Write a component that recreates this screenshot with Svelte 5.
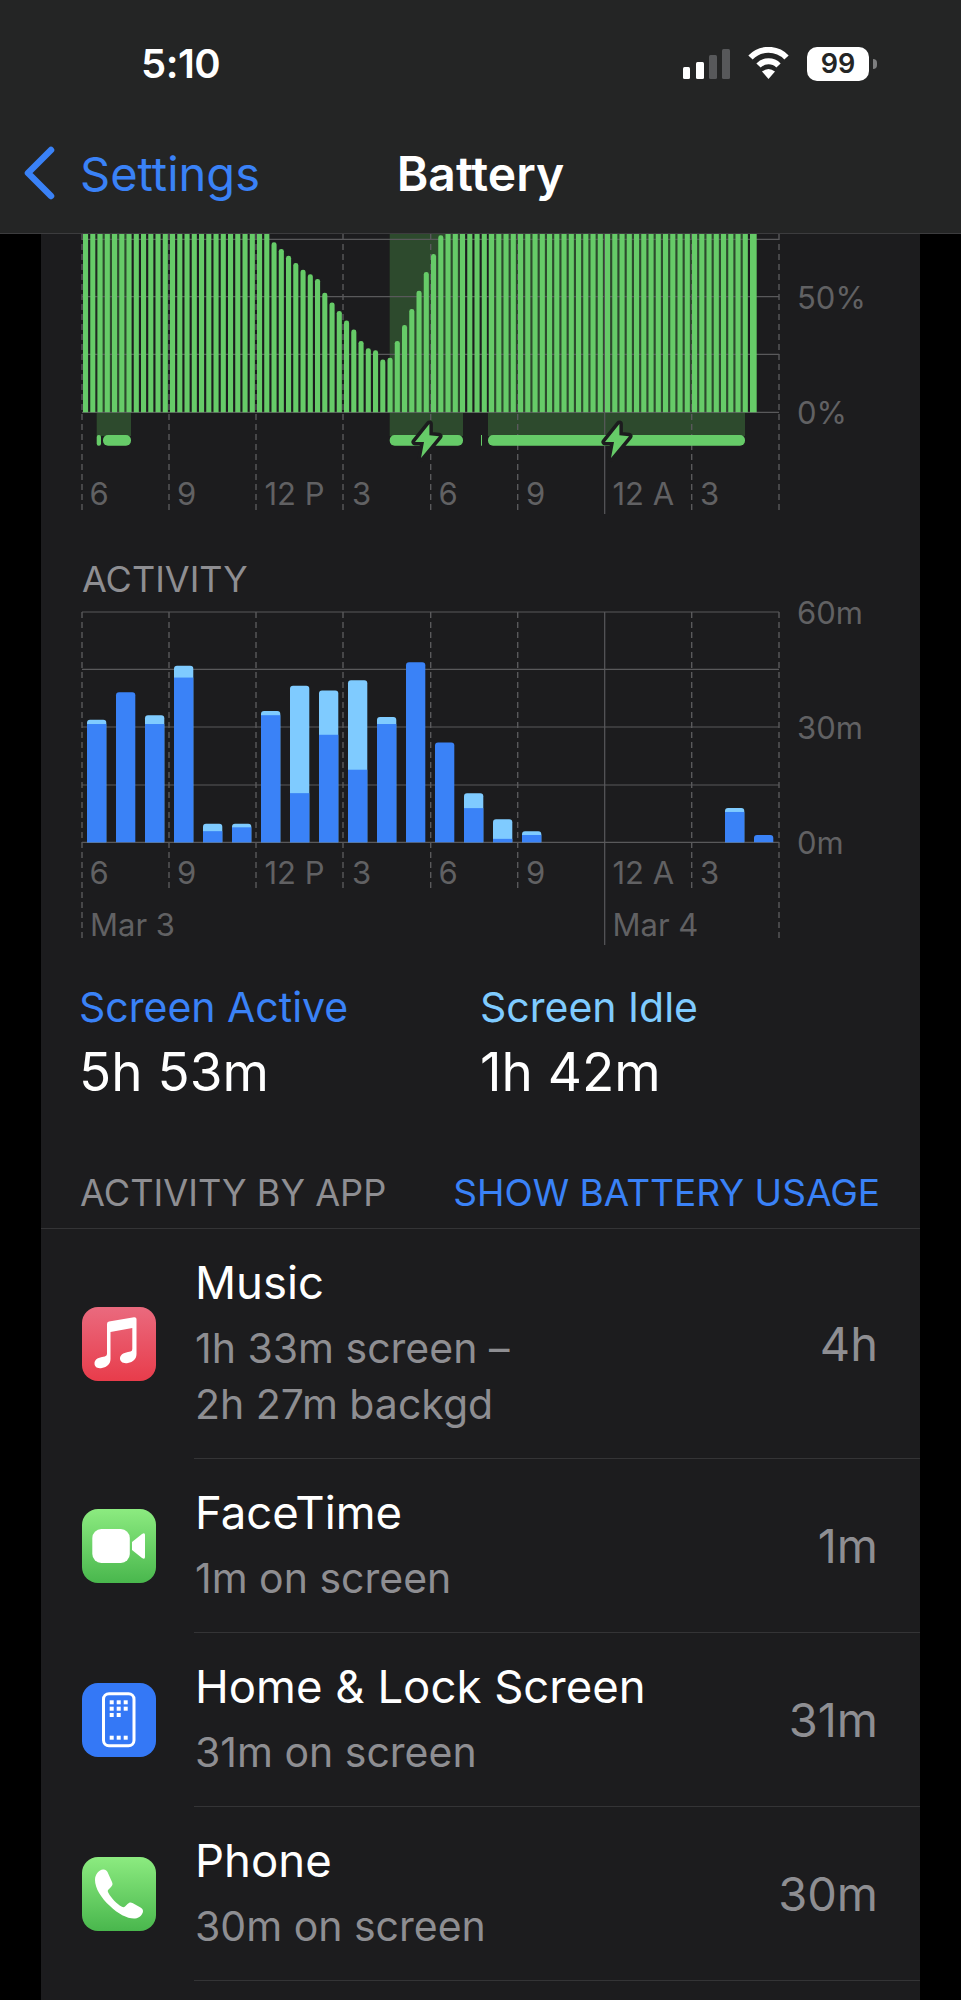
<script>
  // battery level per 15 min bar (percent), 93 bars
  const dip = [73.8, 70.9, 67.9, 64.8, 61.9, 59.9, 57.9, 51.9, 47.7, 44, 39.8, 35.9, 31, 27.8, 26.9, 22.9, 23.7, 31, 37.9, 44.8, 52.8, 60.9, 68.7, 76.8];
  const levels = [...Array(26).fill(100), ...dip, ...Array(43).fill(100)];

  // [active, idle] minutes per hour
  const activity = [
    [30.8, 1.1], [39.1, 0], [30.8, 2.3], [42.9, 3.1], [2.9, 1.9], [3.9, 0.9],
    [33.1, 1.1], [12.8, 28], [28, 11.5], [18.9, 23.3], [30.8, 1.8], [46.9, 0],
    [26, 0], [8.9, 3.9], [0.9, 5.1], [1.9, 1], [0, 0], [0, 0],
    [0, 0], [0, 0], [0, 0], [0, 0], [7.9, 1], [1.9, 0]
  ];

  const hours = [82, 169, 256, 343, 430.7, 517.7, 604.7, 691.7, 779];
  const hourLabels = [
    { x: 89.5, t: '6' }, { x: 177, t: '9' }, { x: 264.5, t: '12 P' }, { x: 352, t: '3' },
    { x: 438.5, t: '6' }, { x: 526, t: '9' }, { x: 612.5, t: '12 A' }, { x: 700, t: '3' }
  ];
  const charging = [
    { x: 96.7, w: 34.3 },
    { x: 389.7, w: 73.3 },
    { x: 488, w: 257 }
  ];
  const pills = [
    { x: 96.7, w: 4.3, r: 2 },
    { x: 103, w: 28, r: 5 },
    { x: 389.7, w: 73.3, r: 5 },
    { x: 481, w: 1, r: 0 },
    { x: 488, w: 257, r: 5 }
  ];
  const bolts = [426.7, 616.7];

  const battBase = 412.3;
  const actBase = 842.3;
  const perMin = 3.84;

  function topRound(x, w, top, bottom, r) {
    return `M${x} ${bottom}V${top + r}Q${x} ${top} ${x + r} ${top}H${x + w - r}Q${x + w} ${top} ${x + w} ${top + r}V${bottom}Z`;
  }

  const apps = [
    { name: 'Music', sub: ['1h 33m screen –', '2h 27m backgd'], time: '4h', icon: 'music' },
    { name: 'FaceTime', sub: ['1m on screen'], time: '1m', icon: 'facetime' },
    { name: 'Home & Lock Screen', sub: ['31m on screen'], time: '31m', icon: 'home' },
    { name: 'Phone', sub: ['30m on screen'], time: '30m', icon: 'phone' }
  ];
</script>

<div class="screen">
  <header class="top">
    <div class="status">
      <span class="clock">5:10</span>
      <div class="status-icons">
        <div class="signal">
          <i class="s1"></i><i class="s2"></i><i class="s3 off"></i><i class="s4 off"></i>
        </div>
        <svg class="wifi" width="43" height="32" viewBox="0 0 43 32">
          <path d="M3.5 10.5A25 25 0 0 1 39.5 10.5" fill="none" stroke="#fff" stroke-width="6" />
          <path d="M11.5 18.5A14 14 0 0 1 31.5 18.5" fill="none" stroke="#fff" stroke-width="6" />
          <path d="M15 24.5Q21.5 19.5 28 24.5L21.5 32Z" fill="#fff" />
        </svg>
        <div class="batt">
          <span class="batt-body">99</span>
          <span class="batt-nub"></span>
        </div>
      </div>
    </div>
    <nav class="nav">
      <div class="back">
        <svg width="32" height="54" viewBox="0 0 32 54">
          <path d="M28 4L5 27L28 50" fill="none" stroke="#3a82f7" stroke-width="6.5" stroke-linecap="round" stroke-linejoin="round" />
        </svg>
        <span>Settings</span>
      </div>
      <div class="title">Battery</div>
      <div></div>
    </nav>
  </header>

  <main class="content">
    <svg class="chart" width="879" height="292" viewBox="41 234 879 292">
      {#each charging as c}
        <rect x={c.x} y="234" width={c.w} height="202" fill="#2d4a2d" />
      {/each}
      {#each [239.3, 296.7, 354.3, 412.3] as y}
        <line class="grid" x1="82" x2="779" y1={y} y2={y} />
      {/each}
      {#each hours as x, i}
        {#if i === 6}
          <line class="grid" x1={x} x2={x} y1="234" y2="514" />
        {:else}
          <line class="dash" x1={x} x2={x} y1="234" y2="510" />
        {/if}
      {/each}
      {#each levels as level, i}
        <path class="bar" d={topRound(83 + i * 7.25, i === 92 ? 6.7 : 5.1, battBase - level * 2.304, battBase, 2.4)} />
      {/each}
      {#each pills as p}
        <rect class="bar" x={p.x} y="435" width={p.w} height="10.7" rx={p.r} />
      {/each}
      {#each bolts as x}
        <path class="bolt" transform="translate({x} 438)" d="M2.7 -14L-11.7 4L-2.7 4L-5.7 20L12.3 -1.7L2.7 -2.7Z" />
      {/each}
      {#each hourLabels as l}
        <text class="axis" x={l.x} y="505">{l.t}</text>
      {/each}
      <text class="axis" x="797" y="309">50%</text>
      <text class="axis" x="797" y="424">0%</text>
    </svg>

    <h2 class="heading">ACTIVITY</h2>

    <svg class="chart" width="879" height="355" viewBox="41 595 879 355">
      {#each [612, 669.3, 727, 785, 842.3] as y}
        <line class="grid" x1="82" x2="779" y1={y} y2={y} />
      {/each}
      {#each hours as x, i}
        {#if i === 6}
          <line class="grid" x1={x} x2={x} y1="612" y2="945" />
        {:else}
          <line class="dash" x1={x} x2={x} y1="612" y2={i === 0 || i === 8 ? 940 : 888} />
        {/if}
      {/each}
      {#each activity as [active, idle], i}
        {#if active + idle > 0}
          {@const x = 87 + i * 29}
          {@const top = actBase - (active + idle) * perMin}
          <path d={topRound(x, 19.3, top, actBase, 3)} fill={idle > 0 ? '#7fcbff' : '#3a82f7'} />
          {#if idle > 0}
            <rect x={x} y={actBase - active * perMin} width="19.3" height={active * perMin} fill="#3a82f7" />
          {/if}
        {/if}
      {/each}
      {#each hourLabels as l}
        <text class="axis" x={l.x} y="884">{l.t}</text>
      {/each}
      <text class="axis" x="90" y="936">Mar 3</text>
      <text class="axis" x="612.5" y="936">Mar 4</text>
      <text class="axis" x="797" y="624">60m</text>
      <text class="axis" x="797" y="739">30m</text>
      <text class="axis" x="797" y="854">0m</text>
    </svg>

    <section class="stats">
      <div class="stat">
        <div class="stat-label active">Screen Active</div>
        <div class="stat-value">5h 53m</div>
      </div>
      <div class="stat">
        <div class="stat-label idle">Screen Idle</div>
        <div class="stat-value">1h 42m</div>
      </div>
    </section>

    <div class="by-app">
      <span class="by-app-title">ACTIVITY BY APP</span>
      <span class="by-app-link">SHOW BATTERY USAGE</span>
    </div>

    <ul class="apps">
      {#each apps as app}
        <li class="row">
          <svg class="app-icon" width="74" height="74" viewBox="0 0 74 74">
            <defs>
              <linearGradient id="g-{app.icon}" x1="0" y1="0" x2="0" y2="1">
                {#if app.icon === 'music'}
                  <stop offset="0" stop-color="#ea6a7e" /><stop offset="1" stop-color="#e83c4b" />
                {:else if app.icon === 'home'}
                  <stop offset="0" stop-color="#3478f6" /><stop offset="1" stop-color="#3478f6" />
                {:else}
                  <stop offset="0" stop-color="#8ceb80" /><stop offset="1" stop-color="#49b74d" />
                {/if}
              </linearGradient>
            </defs>
            <rect width="74" height="74" rx="16" fill="url(#g-{app.icon})" />
            {#if app.icon === 'music'}
              <path fill="#fff" d="M25 17Q25 15 27 14.6L52 10.2Q54.5 10 54.5 12L54.5 47C54.5 52 51 55 46 56C41 57 38 54.5 38 51.5C38 48 41 46 46 45L48.5 44.5Q50.3 44 50.3 42L50.3 21L28.5 25L28.5 52C28.5 57 25 60 20 61C15 62 12.5 59.5 12.5 56.5C12.5 53 15 51 20 50L22.8 49.4Q25 49 25 47Z" />
            {:else if app.icon === 'facetime'}
              <rect x="10.3" y="20" width="37.5" height="34" rx="9" fill="#fff" />
              <path fill="#fff" d="M50 33L60 25Q63 23 63 26L63 48Q63 51 60 49L50 41Z" />
            {:else if app.icon === 'home'}
              <rect x="21.5" y="10.8" width="30.5" height="52" rx="5.5" fill="none" stroke="#fff" stroke-width="3" />
              {#each [[27.7, 17.3], [34.7, 17.3], [41.7, 17.3], [27.7, 23.7], [34.7, 23.7], [41.7, 23.7], [27.7, 30], [34.7, 30], [27.7, 52.7], [34.7, 52.7], [41.7, 52.7]] as [x, y]}
                <rect {x} {y} width="4" height="4" fill="#fff" />
              {/each}
            {:else}
              <path fill="#fff" d="M21 12.5C17 13 13 17 13 23C13 31 19 41 28 49C36 57 46 62 53 61.5C58 61 61 57 61 54C61 52.5 60 51.5 58.5 50.5L50.5 46C48.5 45 47 45.5 45.5 47L43 49.5C42 50.5 41 50.5 39.5 49.5C35 47 29 41 26.5 36C25.5 34.5 25.5 33.5 26.5 32.5L29 30C30.5 28.5 31 27 30 25L25.5 15C24.5 13 23 12.2 21 12.5Z" />
            {/if}
          </svg>
          <div class="row-body">
            <div class="row-text">
              <div class="app-name">{app.name}</div>
              <div class="app-sub">
                {#each app.sub as line}
                  <div>{line}</div>
                {/each}
              </div>
            </div>
            <div class="app-time">{app.time}</div>
          </div>
        </li>
      {/each}
    </ul>
  </main>
</div>

<style>
  :global(body) {
    margin: 0;
    background: #000;
  }

  .screen {
    width: 961px;
    height: 2000px;
    overflow: hidden;
    display: flex;
    flex-direction: column;
    background: #000;
    font-family: Inter, "Liberation Sans", sans-serif;
    color: #fff;
  }

  /* top bar */
  .top {
    height: 233px;
    background: #242525;
    border-bottom: 1px solid #3c3c3e;
    flex: none;
  }

  .status {
    height: 114px;
    display: flex;
    justify-content: space-between;
    align-items: flex-start;
    padding: 47px 84px 0 141px;
    box-sizing: border-box;
  }

  .clock {
    font-size: 40px;
    font-weight: 600;
    line-height: 38px;
    letter-spacing: -0.5px;
    margin-top: -2px;
  }

  .status-icons {
    display: flex;
    align-items: flex-start;
    gap: 17px;
  }

  .signal {
    display: flex;
    align-items: flex-end;
    gap: 5.5px;
    height: 32px;
  }

  .signal i {
    display: block;
    width: 7.7px;
    background: #fff;
    border-radius: 1.5px;
  }

  .signal .off {
    background: #57585a;
  }

  .s1 { height: 11.6px; }
  .s2 { height: 17.3px; }
  .s3 { height: 23.6px; }
  .s4 { height: 30px; }

  .batt {
    display: flex;
    align-items: center;
    gap: 4px;
  }

  .batt-body {
    width: 62px;
    height: 33.5px;
    border-radius: 10px;
    background: #fff;
    color: #242525;
    font-size: 27px;
    font-weight: 600;
    line-height: 33.5px;
    text-align: center;
  }

  .batt-nub {
    width: 4px;
    height: 10px;
    border-radius: 0 5px 5px 0;
    background: #7d7e7f;
  }

  .nav {
    display: grid;
    grid-template-columns: 1fr auto 1fr;
    align-items: center;
    height: 118px;
  }

  .back {
    display: flex;
    align-items: center;
    gap: 25px;
    padding-left: 23px;
    color: #3a82f7;
    font-size: 47px;
  }

  .back svg {
    flex: none;
  }

  .title {
    font-size: 48px;
    font-weight: 600;
  }

  /* scrolled content */
  .content {
    flex: 1;
    margin: 0 41px;
    background: #1c1c1e;
    min-height: 0;
    overflow: hidden;
  }

  .chart {
    display: block;
  }

  .grid {
    stroke: #59595b;
    stroke-width: 1.2;
  }

  .dash {
    stroke: #59595b;
    stroke-width: 1.4;
    stroke-dasharray: 6 4;
  }

  .bar {
    fill: #66cb68;
  }

  .bolt {
    fill: #66cb68;
    stroke: #1c1c1e;
    stroke-width: 7;
    stroke-linejoin: round;
    paint-order: stroke;
  }

  .axis {
    fill: #616163;
    font-size: 31px;
    font-family: Inter, "Liberation Sans", sans-serif;
  }

  .heading {
    margin: 0;
    height: 69px;
    padding: 31px 0 0 41px;
    box-sizing: border-box;
    font-size: 36px;
    line-height: 44px;
    font-weight: 400;
    color: #8e8e92;
  }

  .stats {
    display: grid;
    grid-template-columns: 401px 1fr;
    padding: 33px 0 0 38px;
  }

  .stat-label {
    font-size: 41px;
    line-height: 48px;
  }

  .active { color: #3a82f7; }
  .idle { color: #7fcbff; }

  .stat-value {
    font-size: 53px;
    line-height: 62px;
    margin-top: 10px;
  }

  .by-app {
    display: flex;
    justify-content: space-between;
    align-items: baseline;
    padding: 68px 40px 0 39px;
    height: 126px;
    box-sizing: border-box;
    border-bottom: 1px solid #343436;
    line-height: 44px;
    white-space: nowrap;
  }

  .by-app-title {
    color: #8e8e92;
    font-size: 36.2px;
  }

  .by-app-link {
    color: #3a82f7;
    font-size: 37px;
  }

  .apps {
    list-style: none;
    margin: 0;
    padding: 0;
  }

  .row {
    display: flex;
    align-items: center;
    padding-left: 41px;
  }

  .app-icon {
    flex: none;
  }

  .row-body {
    flex: 1;
    display: flex;
    justify-content: space-between;
    align-items: center;
    margin-left: 38px;
    padding: 26px 42px 26px 1px;
    border-bottom: 1px solid #343436;
  }

  .app-name {
    font-size: 45.5px;
    line-height: 56px;
  }

  .app-sub {
    font-size: 41px;
    line-height: 56px;
    color: #8e8e92;
    margin-top: 9px;
  }

  .app-time {
    font-size: 47px;
    line-height: 56px;
    color: #8e8e92;
  }
</style>
